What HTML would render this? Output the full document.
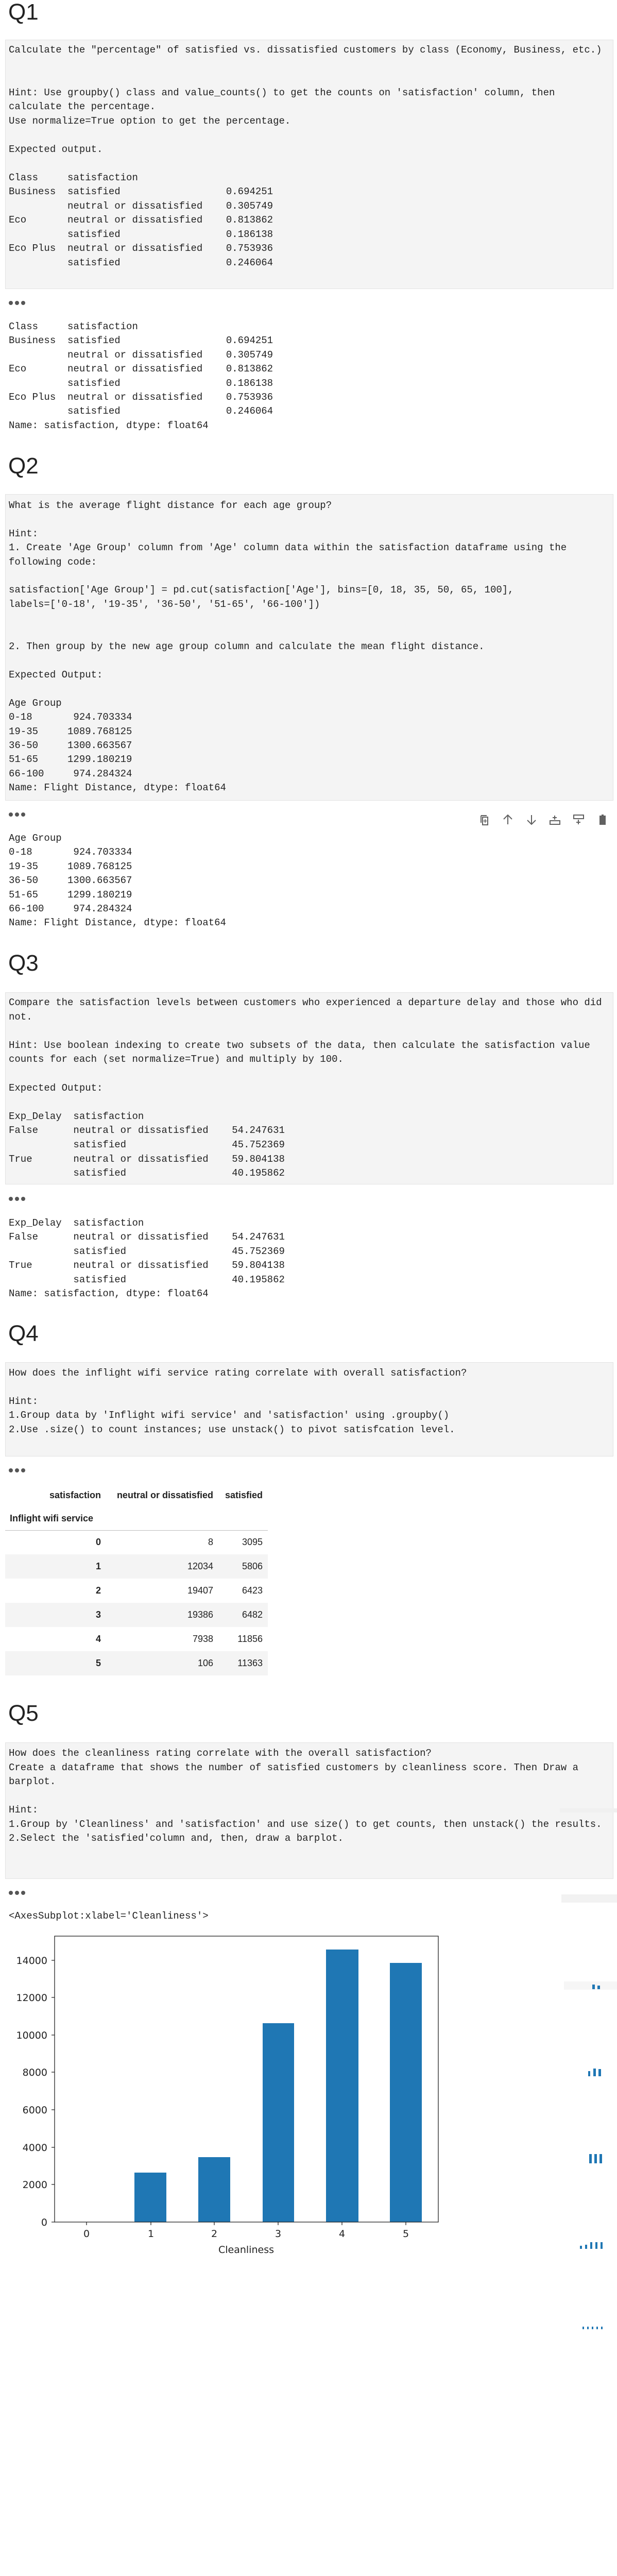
<!DOCTYPE html>
<html><head><meta charset="utf-8">
<style>
html,body{margin:0;padding:0;background:#fff;}
html{width:1198px;height:5071px;overflow:hidden;}
body{width:1198px;height:5071px;position:relative;overflow:hidden;font-family:"Liberation Sans",sans-serif;color:#222;}
.h{position:absolute;left:16px;font-size:44px;line-height:44px;color:#222;font-weight:normal;}
.box{position:absolute;left:10px;width:1179px;background:#f4f4f4;border:1px solid #e2e2e2;}
pre{position:absolute;left:17px;margin:0;font-family:"Liberation Mono",monospace;font-size:19px;line-height:27.4px;color:#222;white-space:pre;}
.dots{position:absolute;left:17px;width:40px;height:9px;}
.dots i{position:absolute;top:0;width:8px;height:8px;border-radius:50%;background:#555;}
table{position:absolute;left:10px;border-collapse:collapse;font-family:"Liberation Sans",sans-serif;font-size:18px;color:#222;}
td,th{padding:0;text-align:right;}
.mm{position:absolute;background:#eee;}
</style></head><body>

<div class="h" style="top:2px">Q1</div>
<div class="box" style="top:77px;height:482px"></div>
<pre style="top:84px;line-height:27.5px">Calculate the "percentage" of satisfied vs. dissatisfied customers by class (Economy, Business, etc.)


Hint: Use groupby() class and value_counts() to get the counts on 'satisfaction' column, then
calculate the percentage.
Use normalize=True option to get the percentage.

Expected output.

Class     satisfaction
Business  satisfied                  0.694251
          neutral or dissatisfied    0.305749
Eco       neutral or dissatisfied    0.813862
          satisfied                  0.186138
Eco Plus  neutral or dissatisfied    0.753936
          satisfied                  0.246064</pre>
<div class="dots" style="top:584px"><i style="left:0"></i><i style="left:12px"></i><i style="left:24px"></i></div>
<pre style="top:621px">Class     satisfaction
Business  satisfied                  0.694251
          neutral or dissatisfied    0.305749
Eco       neutral or dissatisfied    0.813862
          satisfied                  0.186138
Eco Plus  neutral or dissatisfied    0.753936
          satisfied                  0.246064
Name: satisfaction, dtype: float64</pre>

<div class="h" style="top:883px">Q2</div>
<div class="box" style="top:959px;height:593px"></div>
<pre style="top:968px">What is the average flight distance for each age group?

Hint:
1. Create 'Age Group' column from 'Age' column data within the satisfaction dataframe using the
following code:

satisfaction['Age Group'] = pd.cut(satisfaction['Age'], bins=[0, 18, 35, 50, 65, 100],
labels=['0-18', '19-35', '36-50', '51-65', '66-100'])


2. Then group by the new age group column and calculate the mean flight distance.

Expected Output:

Age Group
0-18       924.703334
19-35     1089.768125
36-50     1300.663567
51-65     1299.180219
66-100     974.284324
Name: Flight Distance, dtype: float64</pre>
<div class="dots" style="top:1577px"><i style="left:0"></i><i style="left:12px"></i><i style="left:24px"></i></div>
<svg style="position:absolute;left:930px;top:1580px" width="256" height="22" viewBox="0 0 256 22" fill="none" stroke="#616161" stroke-width="2">
 <path d="M4 3v14M4 3h11M7 6h10v15H7z"/><path d="M12 10v7M8.5 13.5h7" stroke-width="1.6"/>
 <path d="M56 20V3M48 10l8-8 8 8"/>
 <path d="M102 2v17M94 12l8 8 8-8"/>
 <path d="M147 3v8M143 7h8M138 13h19v7h-19z"/>
 <path d="M184 2h19v7h-19zM193 11v9M189 16h8"/>
 <path d="M234 4h12M238 2h4" /><path d="M235 6h10v14h-10z" fill="#616161"/>
</svg>
<pre style="top:1614px">Age Group
0-18       924.703334
19-35     1089.768125
36-50     1300.663567
51-65     1299.180219
66-100     974.284324
Name: Flight Distance, dtype: float64</pre>

<div class="h" style="top:1848px">Q3</div>
<div class="box" style="top:1926px;height:371px"></div>
<pre style="top:1933px;line-height:27.6px">Compare the satisfaction levels between customers who experienced a departure delay and those who did
not.

Hint: Use boolean indexing to create two subsets of the data, then calculate the satisfaction value
counts for each (set normalize=True) and multiply by 100.

Expected Output:

Exp_Delay  satisfaction
False      neutral or dissatisfied    54.247631
           satisfied                  45.752369
True       neutral or dissatisfied    59.804138
           satisfied                  40.195862</pre>
<div class="dots" style="top:2323px"><i style="left:0"></i><i style="left:12px"></i><i style="left:24px"></i></div>
<pre style="top:2361px">Exp_Delay  satisfaction
False      neutral or dissatisfied    54.247631
           satisfied                  45.752369
True       neutral or dissatisfied    59.804138
           satisfied                  40.195862
Name: satisfaction, dtype: float64</pre>

<div class="h" style="top:2567px">Q4</div>
<div class="box" style="top:2644px;height:181px"></div>
<pre style="top:2652px">How does the inflight wifi service rating correlate with overall satisfaction?

Hint:
1.Group data by 'Inflight wifi service' and 'satisfaction' using .groupby()
2.Use .size() to count instances; use unstack() to pivot satisfcation level.</pre>
<div class="dots" style="top:2850px"><i style="left:0"></i><i style="left:12px"></i><i style="left:24px"></i></div>

<table style="top:2879px;width:510px">
<tr style="height:46px"><th style="width:186px">satisfaction</th><th style="width:218px">neutral or dissatisfied</th><th style="width:96px;padding-right:10px">satisfied</th></tr>
<tr style="height:45px;border-bottom:1px solid #bdbdbd"><th style="text-align:left;padding-left:9px;white-space:nowrap">Inflight wifi service</th><td></td><td></td></tr>
<tr style="height:47px"><th>0</th><td>8</td><td style="padding-right:10px">3095</td></tr>
<tr style="height:47px;background:#f4f4f4"><th>1</th><td>12034</td><td style="padding-right:10px">5806</td></tr>
<tr style="height:47px"><th>2</th><td>19407</td><td style="padding-right:10px">6423</td></tr>
<tr style="height:47px;background:#f4f4f4"><th>3</th><td>19386</td><td style="padding-right:10px">6482</td></tr>
<tr style="height:47px"><th>4</th><td>7938</td><td style="padding-right:10px">11856</td></tr>
<tr style="height:47px;background:#f4f4f4"><th>5</th><td>106</td><td style="padding-right:10px">11363</td></tr>
</table>

<div class="h" style="top:3304px">Q5</div>
<div class="box" style="top:3382px;height:263px"></div>
<pre style="top:3390px;line-height:27.5px">How does the cleanliness rating correlate with the overall satisfaction?
Create a dataframe that shows the number of satisfied customers by cleanliness score. Then Draw a
barplot.

Hint:
1.Group by 'Cleanliness' and 'satisfaction' and use size() to get counts, then unstack() the results.
2.Select the 'satisfied'column and, then, draw a barplot.</pre>
<div class="dots" style="top:3670px"><i style="left:0"></i><i style="left:12px"></i><i style="left:24px"></i></div>
<pre style="top:3706px">&lt;AxesSubplot:xlabel='Cleanliness'&gt;</pre>

<svg style="position:absolute;left:0;top:3740px" width="900" height="650" viewBox="0 3740 900 650" font-family="DejaVu Sans, sans-serif" font-size="19" fill="#222">
 <g fill="#1f77b4">
  <rect x="261" y="4217" width="62" height="96"/>
  <rect x="385" y="4187" width="62" height="126"/>
  <rect x="510" y="3927" width="61" height="386"/>
  <rect x="633" y="3784" width="63" height="529"/>
  <rect x="757" y="3810" width="62" height="503"/>
 </g>
 <rect x="106" y="3758" width="745" height="555" fill="none" stroke="#222" stroke-width="1.3"/>
 <g stroke="#222" stroke-width="1.3">
  <path d="M100 4313h6M100 4240h6M100 4168h6M100 4095h6M100 4022h6M100 3950h6M100 3877h6M100 3805h6"/>
  <path d="M168 4313v6M293 4313v6M416 4313v6M540 4313v6M664 4313v6M788 4313v6"/>
 </g>
 <g text-anchor="end">
  <text x="92" y="4320">0</text><text x="92" y="4247">2000</text><text x="92" y="4175">4000</text>
  <text x="92" y="4102">6000</text><text x="92" y="4029">8000</text><text x="92" y="3957">10000</text>
  <text x="92" y="3884">12000</text><text x="92" y="3812">14000</text>
 </g>
 <g text-anchor="middle">
  <text x="168" y="4342">0</text><text x="293" y="4342">1</text><text x="416" y="4342">2</text>
  <text x="540" y="4342">3</text><text x="664" y="4342">4</text><text x="788" y="4342">5</text>
  <text x="478" y="4373">Cleanliness</text>
 </g>
</svg>

<div class="mm" style="left:1087px;top:3510px;width:111px;height:8px;background:#f0f0f0"></div>
<div class="mm" style="left:1090px;top:3677px;width:108px;height:16px;background:#f2f2f2"></div>
<div class="mm" style="left:1095px;top:3846px;width:103px;height:16px;background:#f6f6f6"></div>
<div style="position:absolute;left:1150px;top:3852px;width:5px;height:9px;background:#1f77b4"></div>
<div style="position:absolute;left:1160px;top:3854px;width:5px;height:7px;background:#1f77b4"></div>
<div style="position:absolute;left:1142px;top:4020px;width:4px;height:10px;background:#1f77b4"></div>
<div style="position:absolute;left:1152px;top:4015px;width:5px;height:15px;background:#1f77b4"></div>
<div style="position:absolute;left:1162px;top:4016px;width:5px;height:14px;background:#1f77b4"></div>
<div style="position:absolute;left:1144px;top:4181px;width:5px;height:18px;background:#1f77b4"></div>
<div style="position:absolute;left:1154px;top:4181px;width:5px;height:18px;background:#1f77b4"></div>
<div style="position:absolute;left:1164px;top:4181px;width:5px;height:18px;background:#1f77b4"></div>
<div style="position:absolute;left:1126px;top:4359px;width:4px;height:6px;background:#1f77b4"></div>
<div style="position:absolute;left:1136px;top:4357px;width:4px;height:8px;background:#1f77b4"></div>
<div style="position:absolute;left:1146px;top:4352px;width:4px;height:13px;background:#1f77b4"></div>
<div style="position:absolute;left:1156px;top:4352px;width:4px;height:13px;background:#1f77b4"></div>
<div style="position:absolute;left:1166px;top:4352px;width:4px;height:13px;background:#1f77b4"></div>
<div style="position:absolute;left:1131px;top:4516px;width:3px;height:5px;background:#1f77b4"></div>
<div style="position:absolute;left:1140px;top:4516px;width:3px;height:5px;background:#1f77b4"></div>
<div style="position:absolute;left:1149px;top:4516px;width:3px;height:5px;background:#1f77b4"></div>
<div style="position:absolute;left:1158px;top:4516px;width:3px;height:5px;background:#1f77b4"></div>
<div style="position:absolute;left:1167px;top:4516px;width:3px;height:5px;background:#1f77b4"></div>

</body></html>
